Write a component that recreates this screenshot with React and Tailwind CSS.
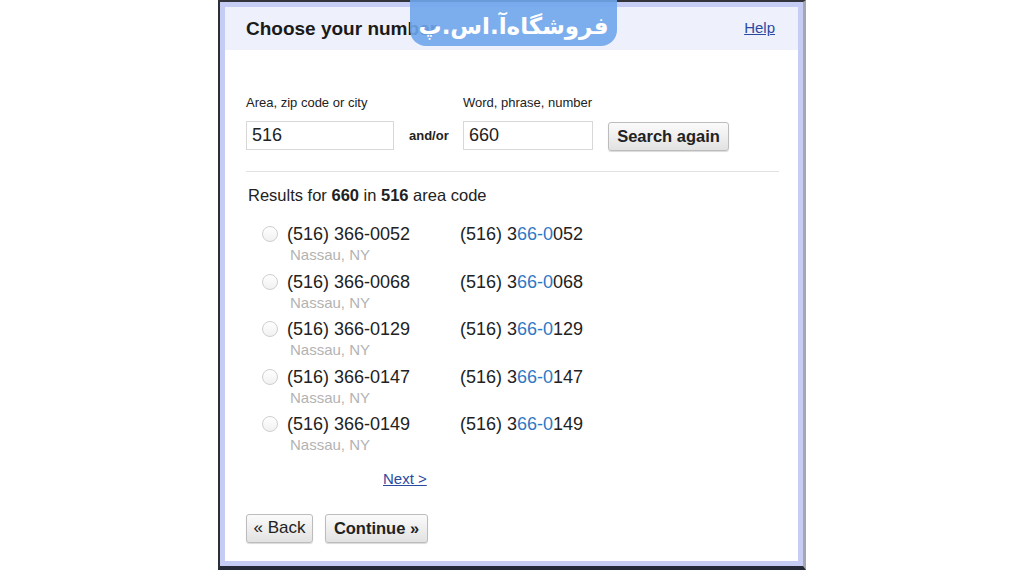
import React from 'react';

const rows = ['0052', '0068', '0129', '0147', '0149'];

function Button({ children, bold, className = '' }) {
    return (
        <button
            className={`h-[29px] rounded-[3px] border border-[#bcbcbc] bg-gradient-to-b from-[#fbfbfb] to-[#e2e2e2] text-[#222] shadow-[0_1px_1px_rgba(0,0,0,0.15)] ${bold ? 'font-bold' : ''} ${className}`}
        >
            {children}
        </button>
    );
}

function Radio() {
    return <span className="block w-[16px] h-[16px] shrink-0 rounded-full border border-[#cfcfcf] bg-gradient-to-b from-white to-[#f1f1f1]" />;
}

export default function App() {
    return (
        <div className="w-[1024px] h-[570px] bg-white overflow-hidden font-['Liberation_Sans',Arial,sans-serif] text-[#222]">
            <div className="ml-[218px] w-[588px] h-[570px] border-l-2 border-t-2 border-r-[3px] border-b-4 border-l-[#2e2e35] border-t-[#33333c] border-r-[#a4a6b0] border-b-[#252a38]">
                <div className="relative h-full border-[5px] border-[#c6cdf4] bg-white flex flex-col">

                    {/* Header */}
                    <div className="h-[43px] shrink-0 bg-[#eef1fb] pl-[21px] pr-[23px] flex items-center justify-between">
                        <h1 className="text-[19px] font-bold text-[#1a1a1a] pt-[1px]">Choose your number</h1>
                        <a href="#" className="text-[15px] text-[#2a4aa0] underline">Help</a>
                    </div>

                    {/* Watermark */}
                    <div className="absolute left-[185px] top-[-10px] w-[207px] h-[49px] rounded-b-[16px] rounded-t-[4px] bg-[#6fa6ec]/90 flex items-center justify-center pt-[9px]">
                        <span dir="rtl" className="text-white text-[23px] font-bold font-['DejaVu_Sans',sans-serif] leading-none">فروشگاه‌آ.اس.پ</span>
                    </div>

                    <div className="pl-[21px] pr-[19px]">
                        {/* Search form */}
                        <div className="mt-[46px] flex items-end">
                            <div className="w-[148px]">
                                <div className="text-[13px] leading-[14px] text-[#222]">Area, zip code or city</div>
                                <div className="mt-[11px] h-[29px] border border-[#d8d8d8] pl-[5px] text-[18px] leading-[27px]">516</div>
                            </div>
                            <span className="w-[69px] pl-[15px] pb-[5px] text-[13px] font-bold">and/or</span>
                            <div className="w-[130px]">
                                <div className="text-[13px] leading-[14px] text-[#222]">Word, phrase, number</div>
                                <div className="mt-[11px] h-[29px] border border-[#d8d8d8] pl-[5px] text-[18px] leading-[27px]">660</div>
                            </div>
                            <Button bold className="ml-[15px] w-[121px] text-[16.5px] mb-[-1px]">Search again</Button>
                        </div>

                        <div className="mt-[21px] border-t border-[#e2e2e2]" />

                        <p className="mt-[13px] pl-[2px] text-[16.5px] leading-[20px]">
                            Results for <b>660</b> in <b>516</b> area code
                        </p>

                        {/* Results */}
                        <div className="mt-[19px] pl-[16px]">
                            {rows.map((r) => (
                                <div key={r} className="h-[47.5px]">
                                    <div className="flex items-center h-[20px]">
                                        <Radio />
                                        <span className="ml-[9px] w-[173px] text-[18px] leading-[20px]">(516) 366-{r}</span>
                                        <span className="text-[18px] leading-[20px]">
                                            (516) 3<span className="text-[#2f78c4]">66-0</span>{r.slice(1)}
                                        </span>
                                    </div>
                                    <div className="mt-[2px] pl-[3px] ml-[25px] text-[15px] leading-[18px] text-[#b3b3b3]">Nassau, NY</div>
                                </div>
                            ))}
                        </div>

                        <a href="#" className="block mt-[8px] ml-[137px] w-fit text-[15px] leading-[18px] text-[#2a4aa0] underline">Next &gt;</a>

                        <div className="mt-[26px] flex gap-[12px]">
                            <Button className="w-[67px] text-[17px]">« Back</Button>
                            <Button bold className="w-[103px] text-[16.5px]">Continue »</Button>
                        </div>
                    </div>
                </div>
            </div>
        </div>
    );
}
